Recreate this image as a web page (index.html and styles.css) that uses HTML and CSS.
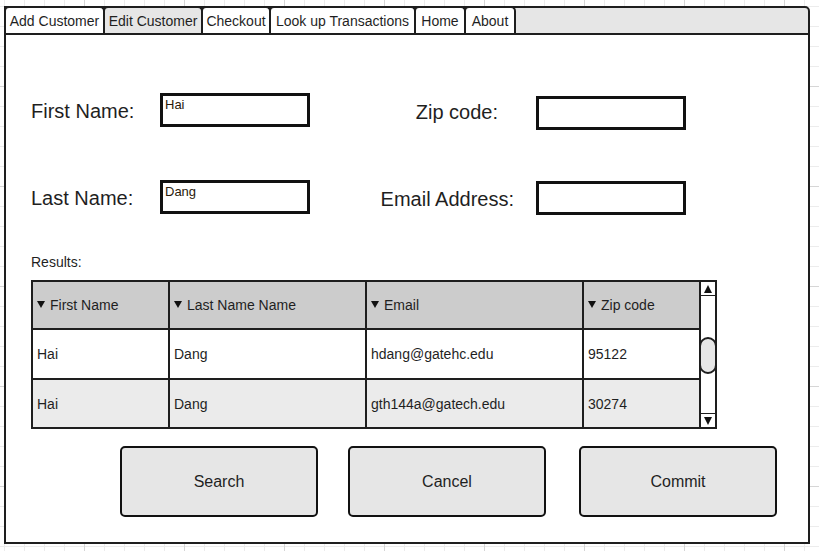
FILE: index.html
```html
<!DOCTYPE html>
<html lang="en">
<head>
    <meta charset="UTF-8">
    <title>Edit Customer</title>
    <link rel="stylesheet" href="styles.css">
</head>
<body>
    <div class="window">
        <!-- Tab strip -->
        <div class="tabs">
            <div class="tab tab-first">Add Customer</div>
            <div class="tab tab-wide tab-active">Edit Customer</div>
            <div class="tab tab-checkout">Checkout</div>
            <div class="tab tab-lookup">Look up Transactions</div>
            <div class="tab">Home</div>
            <div class="tab">About</div>
        </div>

        <div class="content">
            <div class="form-row">
                <label class="field-label label-main">First Name:</label>
                <div class="text-box">Hai</div>
                <label class="field-label label-side label-zip">Zip code:</label>
                <div class="text-box box-zip"></div>
            </div>
            <div class="form-row row-second">
                <label class="field-label label-main">Last Name:</label>
                <div class="text-box">Dang</div>
                <label class="field-label label-side label-email">Email Address:</label>
                <div class="text-box box-email"></div>
            </div>

            <div class="results-label">Results:</div>

            <div class="grid-wrap">
                <table class="results">
                    <thead>
                        <tr>
                            <th class="col-first"><span class="sort-icon"></span>First Name</th>
                            <th class="col-last"><span class="sort-icon"></span>Last Name Name</th>
                            <th class="col-email"><span class="sort-icon"></span>Email</th>
                            <th class="col-zip"><span class="sort-icon"></span>Zip code</th>
                        </tr>
                    </thead>
                    <tbody>
                        <tr>
                            <td>Hai</td>
                            <td>Dang</td>
                            <td>hdang@gatehc.edu</td>
                            <td>95122</td>
                        </tr>
                        <tr class="row-alt">
                            <td>Hai</td>
                            <td>Dang</td>
                            <td>gth144a@gatech.edu</td>
                            <td>30274</td>
                        </tr>
                    </tbody>
                </table>
                <div class="scrollbar">
                    <div class="scroll-btn scroll-up"><span class="arrow-up"></span></div>
                    <div class="scroll-track"><div class="scroll-thumb"></div></div>
                    <div class="scroll-btn scroll-down"><span class="arrow-down"></span></div>
                </div>
            </div>

            <div class="actions">
                <button class="action-btn">Search</button>
                <button class="action-btn">Cancel</button>
                <button class="action-btn btn-commit">Commit</button>
            </div>
        </div>
    </div>
</body>
</html>
```

FILE: styles.css
```css
:root {
    --line: #1e1e1e;
    --panel-gray: #e6e6e6;
    --header-gray: #cccccc;
    --row-alt: #ebebeb;
    --text-color: #1f1f1f;
}

body {
    margin: 0;
    height: 551px;
    font-family: 'Liberation Sans', Arial, sans-serif;
    color: var(--text-color);
    background-color: white;
    background-image:
        linear-gradient(to right, #d6d6d6 1px, transparent 1px),
        linear-gradient(to bottom, #d6d6d6 1px, transparent 1px),
        linear-gradient(to right, #ececec 1px, transparent 1px),
        linear-gradient(to bottom, #ececec 1px, transparent 1px);
    background-size: 100px 100%, 100% 100px, 20px 100%, 100% 20px;
    background-position: 84px 0, 0 86px, 4px 0, 0 6px;
}

.window {
    margin: 6px 0 0 4px;
    width: 806px;
    height: 538px;
    box-sizing: border-box;
    border: 2px solid var(--line);
    border-radius: 0 5px 0 0;
    background-color: var(--panel-gray);
    display: flex;
    flex-direction: column;
}

/* tab strip */
.tabs {
    display: flex;
    margin: -2px 0 0 -2px;
    border-bottom: 2px solid var(--line);
}

.tab {
    width: 52px;
    height: 27px;
    box-sizing: border-box;
    padding-top: 2px;
    margin-right: -2px;
    line-height: 23px;
    font-size: 14px;
    text-align: center;
    white-space: nowrap;
    background-color: white;
    border: 2px solid var(--line);
    border-bottom: none;
    border-radius: 5px 5px 0 0;
}

.tab-first { width: 101px; }
.tab-wide { width: 100px; }
.tab-checkout { width: 70px; }
.tab-lookup { width: 147px; }

.tab-active {
    background-color: var(--panel-gray);
}

.content {
    flex: 1;
    background-color: white;
    padding: 58px 0 0 25px;
}

/* form fields */
.form-row {
    display: flex;
    align-items: flex-start;
}

.row-second {
    margin-top: 50px;
}

.field-label {
    font-size: 20px;
    line-height: 23px;
    margin-top: 7px;
}

.label-main {
    width: 129px;
}

.label-side {
    width: 226px;
    box-sizing: border-box;
    text-align: right;
    margin-top: 8px;
}

.label-zip {
    padding-right: 38px;
}

.label-email {
    padding-right: 22px;
}

.text-box {
    width: 150px;
    height: 34px;
    box-sizing: border-box;
    border: 3px solid #111;
    padding: 1px 0 0 2px;
    font-size: 13px;
    line-height: 15px;
    color: #2a1a0a;
}

.box-zip {
    margin-top: 3px;
}

.box-email {
    margin-top: 1px;
}

.results-label {
    font-size: 14px;
    line-height: 16px;
    margin-top: 39px;
}

/* results grid */
.grid-wrap {
    display: flex;
    margin-top: 10px;
}

.results {
    width: 668px;
    table-layout: fixed;
    border-spacing: 0;
    border-top: 2px solid var(--line);
    border-left: 2px solid var(--line);
    font-size: 14px;
}

.results th,
.results td {
    box-sizing: border-box;
    height: 50px;
    padding: 0 0 0 4px;
    text-align: left;
    font-weight: normal;
    border-right: 2px solid var(--line);
    border-bottom: 2px solid var(--line);
    white-space: nowrap;
}

.results th {
    height: 48px;
    background-color: var(--header-gray);
}

.results th:last-child,
.results td:last-child {
    border-right: none;
}

.row-alt td {
    background-color: var(--row-alt);
    height: 49px;
}

.col-first { width: 137px; }
.col-last { width: 197px; }
.col-email { width: 217px; }
.col-zip { width: 115px; }

.sort-icon {
    display: inline-block;
    width: 0;
    height: 0;
    border-left: 4px solid transparent;
    border-right: 4px solid transparent;
    border-top: 7px solid #111;
    margin-right: 5px;
    vertical-align: 2px;
}

.scrollbar {
    width: 18px;
    box-sizing: border-box;
    border: 2px solid var(--line);
    display: flex;
    flex-direction: column;
    background-color: white;
}

.scroll-btn {
    height: 14px;
    box-sizing: border-box;
    display: flex;
    align-items: center;
    justify-content: center;
}

.scroll-up {
    border-bottom: 1px solid var(--line);
}

.scroll-down {
    border-top: 1px solid var(--line);
}

.arrow-up,
.arrow-down {
    width: 0;
    height: 0;
    border-left: 4px solid transparent;
    border-right: 4px solid transparent;
}

.arrow-up {
    border-bottom: 8px solid #111;
}

.arrow-down {
    border-top: 8px solid #111;
}

.scroll-track {
    flex: 1;
}

.scroll-thumb {
    width: 18px;
    height: 37px;
    box-sizing: border-box;
    margin: 41px 0 0 -2px;
    border: 2px solid var(--line);
    border-radius: 9px;
    background-color: var(--panel-gray);
}

/* buttons */
.actions {
    display: flex;
    gap: 30px;
    margin: 17px 0 0 89px;
}

.action-btn {
    width: 198px;
    height: 71px;
    box-sizing: border-box;
    border: 2px solid #111;
    border-radius: 5px;
    background-color: var(--panel-gray);
    font-family: 'Liberation Sans', Arial, sans-serif;
    font-size: 16px;
    color: var(--text-color);
}

.btn-commit {
    margin-left: 3px;
}
```
